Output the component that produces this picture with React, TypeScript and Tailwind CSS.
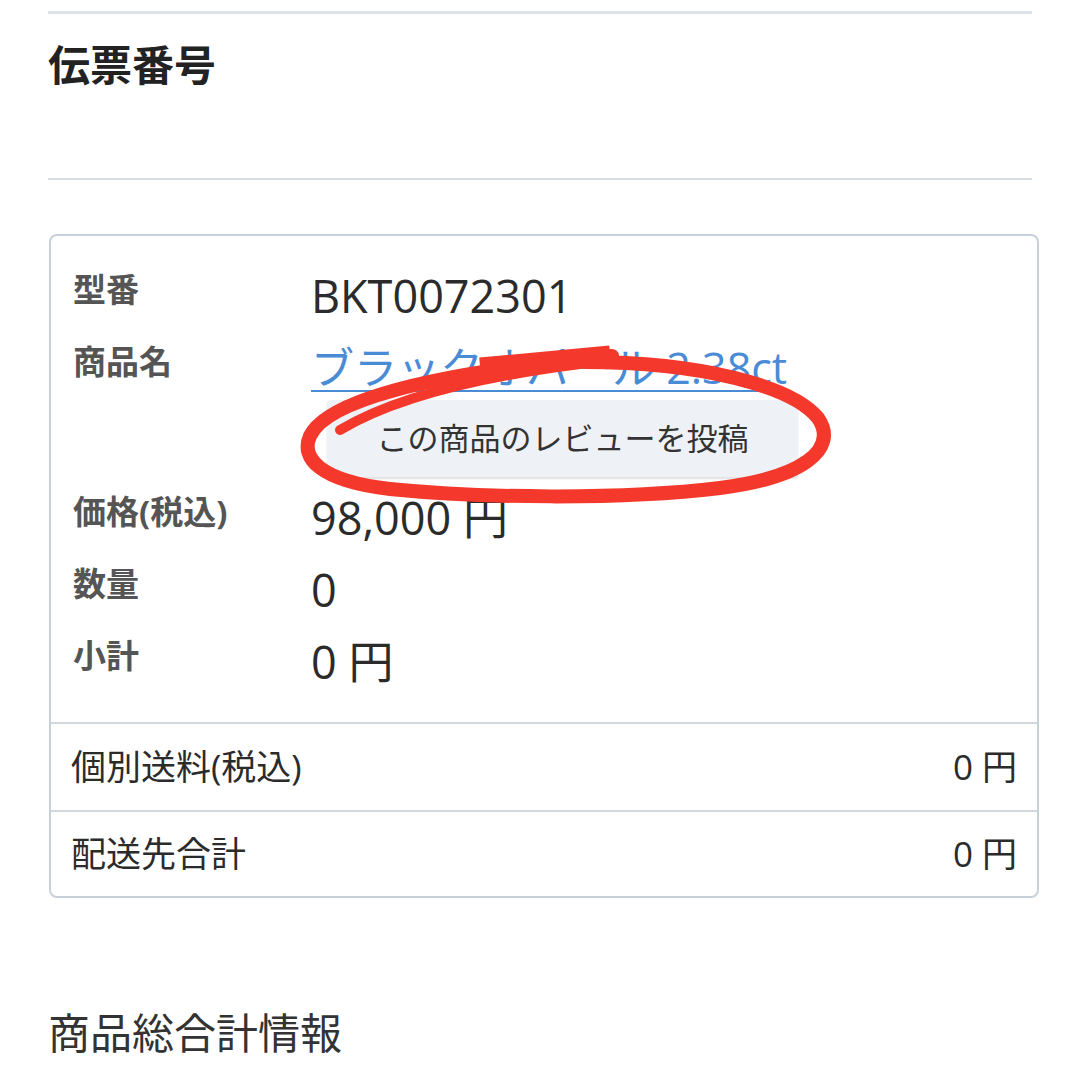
const jp = "font-['Open_Sans','Noto_Sans_CJK_JP',sans-serif]";

interface RowProps {
  label: string;
  children: React.ReactNode;
}

const Row = ({ label, children }: RowProps) => (
  <div className="flex items-start h-[72px]">
    <div className="w-[238px] shrink-0 text-[33px] leading-[48px] font-bold text-[#555]">{label}</div>
    <div className="text-[45px] leading-[60px] text-[#2b2b2b]">{children}</div>
  </div>
);

const Ellipse = () => (
  <svg
    className="absolute left-0 top-0 pointer-events-none"
    width="1080"
    height="1080"
    viewBox="0 0 1080 1080"
    fill="none"
  >
    <g stroke="#f4382b" strokeLinecap="round" strokeLinejoin="round">
      {/* inner tail */}
      <path d="M 340 430 C 390 400, 470 378, 580 364" strokeWidth="10" />
      {/* main loop */}
      <path
        d="M 585 362 C 700 362, 792 386, 818 418 C 840 450, 800 478, 720 488 C 620 500, 480 498, 390 489 C 320 481, 300 458, 310 436 C 326 402, 420 374, 612 356"
        strokeWidth="14"
      />
      {/* heavy top end */}
      <path d="M 480 366 L 610 354" strokeWidth="17" strokeLinecap="butt" />
    </g>
  </svg>
);

export default function App() {
  return (
    <div className={`relative w-[1080px] h-[1080px] bg-white overflow-hidden ${jp}`}>
      <div className="ml-[48px] w-[984px] mt-[11px] h-[3px] bg-[#dde3e8]" />
      <h2 className="ml-[48px] mt-[21px] text-[42px] leading-[60px] font-bold text-[#222]">伝票番号</h2>
      <div className="ml-[48px] w-[984px] mt-[83px] h-[2px] bg-[#d5dde3]" />

      <div className="ml-[49px] mt-[54px] w-[990px] border-2 border-[#c8d1d9] rounded-[8px]">
        <div className="pl-[22px] pt-[30px] h-[486px]">
          <Row label="型番">BKT0072301</Row>
          <div className="flex items-start">
            <div className="w-[238px] shrink-0 text-[33px] leading-[48px] font-bold text-[#555]">商品名</div>
            <div>
              <a className="block text-[43px] leading-[60px] text-[#4a8bd6] underline decoration-2 underline-offset-[6px]">
                ブラックオパール 2.38ct
              </a>
              <button className="ml-[16px] mt-[2px] w-[471px] h-[77px] rounded-[4px] bg-[#eef1f5] shadow-[0_2px_2px_rgba(0,0,0,0.12)] text-[31px] text-[#333]">
                この商品のレビューを投稿
              </button>
            </div>
          </div>
          <div className="h-[11px]" />
          <Row label="価格(税込)">98,000 円</Row>
          <Row label="数量">0</Row>
          <Row label="小計">0 円</Row>
        </div>
        <div className="flex items-center justify-between h-[88px] border-t-2 border-[#d0d8de] px-[20px] text-[35px] text-[#2b2b2b]">
          <span>個別送料(税込)</span>
          <span>0 円</span>
        </div>
        <div className="flex items-center justify-between h-[86px] border-t-2 border-[#d0d8de] px-[20px] text-[35px] text-[#2b2b2b]">
          <span>配送先合計</span>
          <span>0 円</span>
        </div>
      </div>

      <h2 className="ml-[48px] mt-[105px] text-[42px] leading-[60px] text-[#333]">商品総合計情報</h2>

      <Ellipse />
    </div>
  );
}
